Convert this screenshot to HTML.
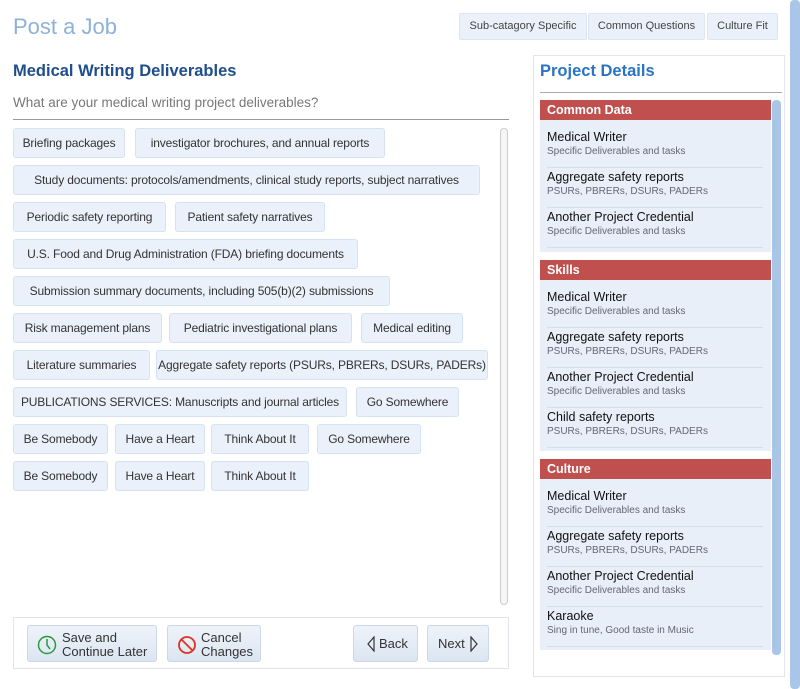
<!DOCTYPE html><html><head><style>
*{margin:0;padding:0;box-sizing:border-box}
body{width:800px;height:689px;background:#fff;font-family:"Liberation Sans",sans-serif;position:relative;overflow:hidden}
.a{position:absolute}
.tab{position:absolute;top:13px;height:27px;background:#eaf1fa;border:1px solid #dde6f0;font-size:11px;color:#444;line-height:25px;text-align:center;border-radius:2px;white-space:nowrap;overflow:hidden}
.tag{position:absolute;height:30px;background:#eaf1fa;border:1px solid #d6e2ef;border-radius:3px;font-size:12px;letter-spacing:-0.15px;color:#333;line-height:28px;text-align:center;white-space:nowrap;overflow:hidden}
.hd{position:absolute;left:540px;width:231px;height:20px;background:#c0504d;color:#fff;font-weight:bold;font-size:12.5px;line-height:20px;padding-left:7px}
.grp{position:absolute;left:540px;width:231px;background:#e8eff9}
.it{position:absolute;left:547px;width:216px;height:40px;border-bottom:1px solid #d5dde8}
.it b{display:block;font-weight:normal;font-size:12.5px;color:#111;margin-top:2px}
.it i{display:block;font-style:normal;font-size:10px;color:#667;margin-top:2px}
.btn{position:absolute;top:625px;height:37px;background:linear-gradient(#eef3fa,#dbe5f1);border:1px solid #cdd8e6;border-radius:3px;font-size:13px;color:#333;line-height:14px}
</style></head><body>
<div class="a" style="left:13px;top:14px;font-size:22px;color:#8eb1d9">Post a Job</div>
<div class="tab" style="left:459px;width:128px">Sub-catagory Specific</div>
<div class="tab" style="left:588px;width:117px">Common Questions</div>
<div class="tab" style="left:707px;width:71px">Culture Fit</div>
<div class="a" style="left:790px;top:0;width:10px;height:689px;background:#a9c6e8;border-radius:4px"></div>
<div class="a" style="left:13px;top:62px;font-size:16.5px;font-weight:bold;color:#1f4e8c">Medical Writing Deliverables</div>
<div class="a" style="left:13px;top:95px;font-size:13.5px;color:#777">What are your medical writing project deliverables?</div>
<div class="a" style="left:13px;top:119px;width:496px;height:1px;background:#999"></div>
<div class="a" style="left:500px;top:128px;width:8px;height:477px;border:1px solid #ccc;border-radius:4px;background:#f6f6f6"></div>
<div class="tag" style="left:13px;top:128px;width:112px">Briefing packages</div>
<div class="tag" style="left:135px;top:128px;width:250px">investigator brochures, and annual reports</div>
<div class="tag" style="left:13px;top:165px;width:467px">Study documents: protocols/amendments, clinical study reports, subject narratives</div>
<div class="tag" style="left:13px;top:202px;width:153px">Periodic safety reporting</div>
<div class="tag" style="left:175px;top:202px;width:150px">Patient safety narratives</div>
<div class="tag" style="left:13px;top:239px;width:345px">U.S. Food and Drug Administration (FDA) briefing documents</div>
<div class="tag" style="left:13px;top:276px;width:377px">Submission summary documents, including 505(b)(2) submissions</div>
<div class="tag" style="left:13px;top:313px;width:149px">Risk management plans</div>
<div class="tag" style="left:169px;top:313px;width:183px">Pediatric investigational plans</div>
<div class="tag" style="left:361px;top:313px;width:102px">Medical editing</div>
<div class="tag" style="left:13px;top:350px;width:137px">Literature summaries</div>
<div class="tag" style="left:156px;top:350px;width:332px">Aggregate safety reports (PSURs, PBRERs, DSURs, PADERs)</div>
<div class="tag" style="left:13px;top:387px;width:334px">PUBLICATIONS SERVICES: Manuscripts and journal articles</div>
<div class="tag" style="left:356px;top:387px;width:103px">Go Somewhere</div>
<div class="tag" style="left:13px;top:424px;width:95px">Be Somebody</div>
<div class="tag" style="left:115px;top:424px;width:90px">Have a Heart</div>
<div class="tag" style="left:211px;top:424px;width:98px">Think About It</div>
<div class="tag" style="left:317px;top:424px;width:104px">Go Somewhere</div>
<div class="tag" style="left:13px;top:461px;width:95px">Be Somebody</div>
<div class="tag" style="left:115px;top:461px;width:90px">Have a Heart</div>
<div class="tag" style="left:211px;top:461px;width:98px">Think About It</div>
<div class="a" style="left:13px;top:617px;width:496px;height:52px;border:1px solid #e0e4ea"></div>
<div class="btn" style="left:27px;width:130px"><svg class="a" style="left:9px;top:9px" width="20" height="20"><circle cx="10" cy="10" r="8.5" fill="none" stroke="#2a9a3a" stroke-width="1.5"/><path d="M10 4v6l3 4" fill="none" stroke="#2a9a3a" stroke-width="1.5"/></svg><div class="a" style="left:34px;top:5px">Save and<br>Continue Later</div></div>
<div class="btn" style="left:167px;width:94px"><svg class="a" style="left:9px;top:9px" width="20" height="20"><circle cx="10" cy="10" r="8" fill="none" stroke="#d32" stroke-width="1.8"/><path d="M4.5 4.5l11 11" stroke="#d32" stroke-width="1.8"/></svg><div class="a" style="left:33px;top:5px">Cancel<br>Changes</div></div>
<div class="btn" style="left:353px;width:65px"><svg class="a" style="left:12px;top:10px" width="10" height="16"><path d="M8 1L2 8l6 7z" fill="none" stroke="#333" stroke-width="1.2"/></svg><div class="a" style="left:25px;top:11px">Back</div></div>
<div class="btn" style="left:427px;width:62px"><div class="a" style="left:10px;top:11px">Next</div><svg class="a" style="left:41px;top:10px" width="10" height="16"><path d="M2 1l6 7-6 7z" fill="none" stroke="#333" stroke-width="1.2"/></svg></div>
<div class="a" style="left:533px;top:55px;width:252px;height:622px;border:1px solid #e2e6ec"></div>
<div class="a" style="left:540px;top:62px;font-size:16.5px;font-weight:bold;color:#2a74c4">Project Details</div>
<div class="a" style="left:540px;top:92px;width:242px;height:1px;background:#aaa"></div>
<div class="a" style="left:772px;top:100px;width:9px;height:555px;background:#a9c6e8;border-radius:4px"></div>
<div class="hd" style="top:100px">Common Data</div>
<div class="grp" style="top:120px;height:132px"></div>
<div class="it" style="top:128px"><b>Medical Writer</b><i>Specific Deliverables and tasks</i></div>
<div class="it" style="top:168px"><b>Aggregate safety reports</b><i>PSURs, PBRERs, DSURs, PADERs</i></div>
<div class="it" style="top:208px"><b>Another Project Credential</b><i>Specific Deliverables and tasks</i></div>
<div class="hd" style="top:260px">Skills</div>
<div class="grp" style="top:280px;height:171px"></div>
<div class="it" style="top:288px"><b>Medical Writer</b><i>Specific Deliverables and tasks</i></div>
<div class="it" style="top:328px"><b>Aggregate safety reports</b><i>PSURs, PBRERs, DSURs, PADERs</i></div>
<div class="it" style="top:368px"><b>Another Project Credential</b><i>Specific Deliverables and tasks</i></div>
<div class="it" style="top:408px"><b>Child safety reports</b><i>PSURs, PBRERs, DSURs, PADERs</i></div>
<div class="hd" style="top:459px">Culture</div>
<div class="grp" style="top:479px;height:171px"></div>
<div class="it" style="top:487px"><b>Medical Writer</b><i>Specific Deliverables and tasks</i></div>
<div class="it" style="top:527px"><b>Aggregate safety reports</b><i>PSURs, PBRERs, DSURs, PADERs</i></div>
<div class="it" style="top:567px"><b>Another Project Credential</b><i>Specific Deliverables and tasks</i></div>
<div class="it" style="top:607px"><b>Karaoke</b><i>Sing in tune, Good taste in Music</i></div>
</body></html>
